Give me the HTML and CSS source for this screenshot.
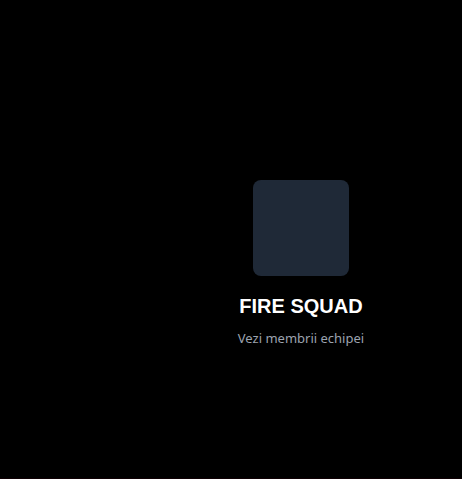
FILE: index.html
```html
<!DOCTYPE html>
<html lang="ro">
<head>
<meta charset="utf-8">
<meta name="viewport" content="width=device-width, initial-scale=1">
<title>Fire Squad</title>
<link rel="stylesheet" href="styles.css">
</head>
<body>
<main class="page">
  <a class="team" href="#membri">
    <span class="team-logo"></span>
    <h2 class="team-name">FIRE SQUAD</h2>
    <span class="team-link">Vezi membrii echipei</span>
  </a>
</main>
</body>
</html>
```

FILE: styles.css
```css
* {
  box-sizing: border-box;
}

body {
  margin: 0;
  background: #000;
}

.page {
  min-height: 100vh;
  padding: 180px 0 32px 140px;
  display: flex;
  justify-content: center;
  align-items: flex-start;
  border-bottom: 1px solid #0e0003;
}

.team {
  display: flex;
  flex-direction: column;
  align-items: center;
  text-decoration: none;
}

.team-logo {
  width: 96px;
  height: 96px;
  border-radius: 8px;
  background: #1f2937;
}

.team-name {
  margin: 16px 0 8px;
  color: #fff;
  font: bold 20px/28px "Liberation Sans", Arial, sans-serif;
}

.team-link {
  color: #9ca3af;
  font: 13px/20px "Noto Sans", sans-serif;
}
```
